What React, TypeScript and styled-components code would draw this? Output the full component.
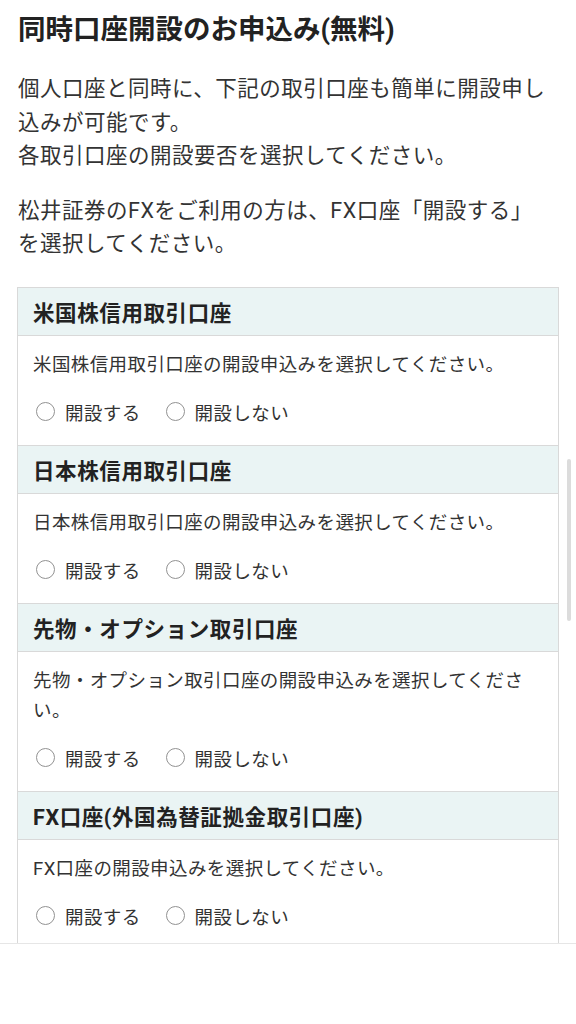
import React from "react";
import styled, { createGlobalStyle } from "styled-components";

const GlobalStyle = createGlobalStyle`
  html, body { margin: 0; padding: 0; background: #fff; }
  body {
    font-family: Roboto, "Noto Sans CJK JP", "Noto Sans", sans-serif;
    color: #333;
    -webkit-font-smoothing: antialiased;
  }
`;

const Page = styled.div`
  padding: 10px 18px 120px 18px;
`;

const Title = styled.h1`
  margin: 0;
  font-size: 27.5px;
  line-height: 40px;
  font-weight: 700;
  color: #222;
`;

const Para = styled.p`
  margin: 0;
  font-size: 21.5px;
  line-height: 33.5px;
  color: #333;
  letter-spacing: 0.5px;
  & + & { margin-top: 21px; }
`;

const Intro = styled.div`
  margin-top: 22px;
`;

const Card = styled.div`
  margin-top: 26px;
  margin-left: -1px;
  margin-right: -1px;
  border: 1px solid #d9d9d9;
  border-bottom: none;
`;

const SectionHeader = styled.div`
  height: 47px;
  display: flex;
  align-items: center;
  padding: 0 15px;
  background: #eaf4f4;
  border-bottom: 1px solid #d9d9d9;
  font-size: 21.5px;
  font-weight: 700;
  color: #222;
  letter-spacing: 0.6px;
`;

const SectionBody = styled.div`
  padding: 14px 15px 18px 15px;
  border-bottom: 1px solid #d9d9d9;
`;

const Desc = styled.div`
  font-size: 18.5px;
  line-height: 30px;
  color: #333;
  letter-spacing: 0.4px;
`;

const RadioRow = styled.div`
  margin-top: 17px;
  padding-left: 3px;
  display: flex;
  align-items: center;
  gap: 25px;
  height: 30px;
`;

const RadioLabel = styled.label`
  display: flex;
  align-items: center;
  gap: 10px;
  font-size: 18.5px;
  color: #333;
  letter-spacing: 0.4px;
`;

const Circle = styled.span`
  width: 17px;
  height: 17px;
  border: 1.7px solid #929292;
  border-radius: 50%;
  background: #fff;
  box-sizing: content-box;
`;

const Footer = styled.div`
  position: fixed;
  left: 0;
  right: 0;
  bottom: 0;
  height: 80px;
  background: #fff;
  border-top: 1px solid #e6e6e6;
`;

const ScrollThumb = styled.div`
  position: fixed;
  right: 5px;
  top: 459px;
  width: 4px;
  height: 162px;
  border-radius: 2px;
  background: #dcdcdc;
`;

const sections = [
  { title: "米国株信用取引口座", desc: "米国株信用取引口座の開設申込みを選択してください。" },
  { title: "日本株信用取引口座", desc: "日本株信用取引口座の開設申込みを選択してください。" },
  { title: "先物・オプション取引口座", desc: "先物・オプション取引口座の開設申込みを選択してください。" },
  { title: "FX口座(外国為替証拠金取引口座)", desc: "FX口座の開設申込みを選択してください。" },
];

export default function App() {
  return (
    <>
      <GlobalStyle />
      <Page>
        <Title>同時口座開設のお申込み(無料)</Title>
        <Intro>
          <Para>
            個人口座と同時に、下記の取引口座も簡単に開設申し込みが可能です。
            <br />
            各取引口座の開設要否を選択してください。
          </Para>
          <Para>
            松井証券のFXをご利用の方は、FX口座「開設する」
            <br />
            を選択してください。
          </Para>
        </Intro>
        <Card>
          {sections.map((s) => (
            <React.Fragment key={s.title}>
              <SectionHeader>{s.title}</SectionHeader>
              <SectionBody>
                <Desc>{s.desc}</Desc>
                <RadioRow>
                  <RadioLabel>
                    <Circle />
                    開設する
                  </RadioLabel>
                  <RadioLabel>
                    <Circle />
                    開設しない
                  </RadioLabel>
                </RadioRow>
              </SectionBody>
            </React.Fragment>
          ))}
        </Card>
      </Page>
      <ScrollThumb />
      <Footer />
    </>
  );
}
